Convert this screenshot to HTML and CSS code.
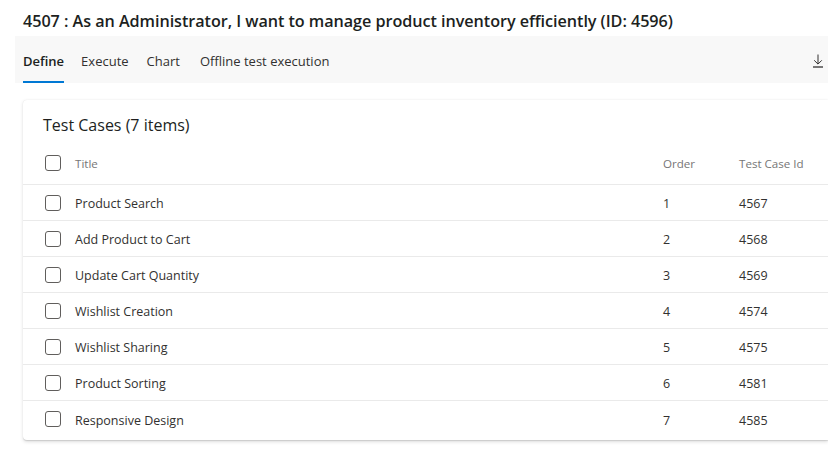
FILE: index.html
```html
<!DOCTYPE html>
<html>
<head>
<meta charset="utf-8">
<link rel="stylesheet" href="styles.css">
</head>
<body>
<div class="page">
  <h1 class="title">4507 : As an Administrator, I want to manage product inventory efficiently (ID: 4596)</h1>
  <div class="tabbar">
    <nav class="tabs">
      <span class="tab active">Define</span>
      <span class="tab">Execute</span>
      <span class="tab">Chart</span>
      <span class="tab">Offline test execution</span>
    </nav>
    <span class="download">
      <svg width="12" height="14" viewBox="0 0 12 14"><path d="M6 0.5v9.5M2.2 6.3l3.8 3.8 3.8-3.8" fill="none" stroke="#323130" stroke-width="1"/><path d="M1 13h10" stroke="#323130" stroke-width="1.3"/></svg>
    </span>
  </div>
  <section class="card">
    <h2 class="card-title">Test Cases (7 items)</h2>
    <div class="row head">
      <span class="cell check"><span class="box"></span></span>
      <span class="cell name">Title</span>
      <span class="cell order">Order</span>
      <span class="cell tcid">Test Case Id</span>
    </div>
    <div class="row"><span class="cell check"><span class="box"></span></span><span class="cell name">Product Search</span><span class="cell order">1</span><span class="cell tcid">4567</span></div>
    <div class="row"><span class="cell check"><span class="box"></span></span><span class="cell name">Add Product to Cart</span><span class="cell order">2</span><span class="cell tcid">4568</span></div>
    <div class="row"><span class="cell check"><span class="box"></span></span><span class="cell name">Update Cart Quantity</span><span class="cell order">3</span><span class="cell tcid">4569</span></div>
    <div class="row"><span class="cell check"><span class="box"></span></span><span class="cell name">Wishlist Creation</span><span class="cell order">4</span><span class="cell tcid">4574</span></div>
    <div class="row"><span class="cell check"><span class="box"></span></span><span class="cell name">Wishlist Sharing</span><span class="cell order">5</span><span class="cell tcid">4575</span></div>
    <div class="row"><span class="cell check"><span class="box"></span></span><span class="cell name">Product Sorting</span><span class="cell order">6</span><span class="cell tcid">4581</span></div>
    <div class="row last"><span class="cell check"><span class="box"></span></span><span class="cell name">Responsive Design</span><span class="cell order">7</span><span class="cell tcid">4585</span></div>
  </section>
</div>
</body>
</html>
```
FILE: styles.css
```css
html, body {
  margin: 0;
  padding: 0;
  background: #ffffff;
  overflow: hidden;
}
body {
  font-family: "Open Sans", "Noto Sans", sans-serif;
  color: #201f1e;
  width: 828px;
  height: 458px;
}
.page {
  padding: 8px 0 0 15px;
}
.title {
  margin: 0 0 0 8px;
  font-size: 16.2px;
  font-weight: 600;
  line-height: 26px;
  height: 28px;
  color: #201f1e;
  letter-spacing: -0.05px;
}
.tabbar {
  background: #f8f8f8;
  height: 47px;
  display: flex;
  align-items: stretch;
  justify-content: space-between;
  padding-left: 8px;
}
.tabs {
  display: flex;
  gap: 17px;
}
.tab {
  font-size: 13px;
  line-height: 50px;
  height: 47px;
  color: #323130;
  position: relative;
}
.tab:nth-child(3) {
  margin-left: 1px;
}
.tab:nth-child(4) {
  margin-left: 3px;
}
.tab.active {
  font-weight: 600;
  color: #201f1e;
}
.tab.active::after {
  content: "";
  position: absolute;
  left: 0;
  right: 0;
  bottom: 0;
  height: 2px;
  background: #0078d4;
}
.download {
  display: flex;
  align-items: center;
  padding-right: 4px;
  padding-top: 3px;
}
.card {
  margin: 17px 0 0 8px;
  background: #fff;
  border-radius: 4px 0 0 4px;
  box-shadow: 0 1.6px 3.6px rgba(0,0,0,0.13), 0 0.3px 0.9px rgba(0,0,0,0.11);
  padding-bottom: 3px;
}
.card-title {
  margin: 0;
  padding: 13px 20px 4px 20px;
  font-size: 16px;
  font-weight: 400;
  line-height: 24px;
  color: #201f1e;
}
.row {
  display: flex;
  align-items: center;
  box-sizing: border-box;
  height: 36px;
  border-bottom: 1px solid #eaeaea;
  font-size: 12.5px;
  color: #323130;
}
.row .name,
.row .order,
.row .tcid {
  padding-top: 2px;
}
.row.head {
  height: 44px;
  font-size: 11.6px;
  color: #767676;
}
.row.last {
  border-bottom: none;
}
.check {
  width: 52px;
  padding-left: 22px;
  box-sizing: border-box;
  display: flex;
  align-items: center;
}
.box {
  width: 14px;
  height: 14px;
  border: 1px solid #605e5c;
  border-radius: 3px;
}
.name {
  width: 588px;
}
.order {
  width: 76px;
}
.tcid {
  flex: 1;
}
```
